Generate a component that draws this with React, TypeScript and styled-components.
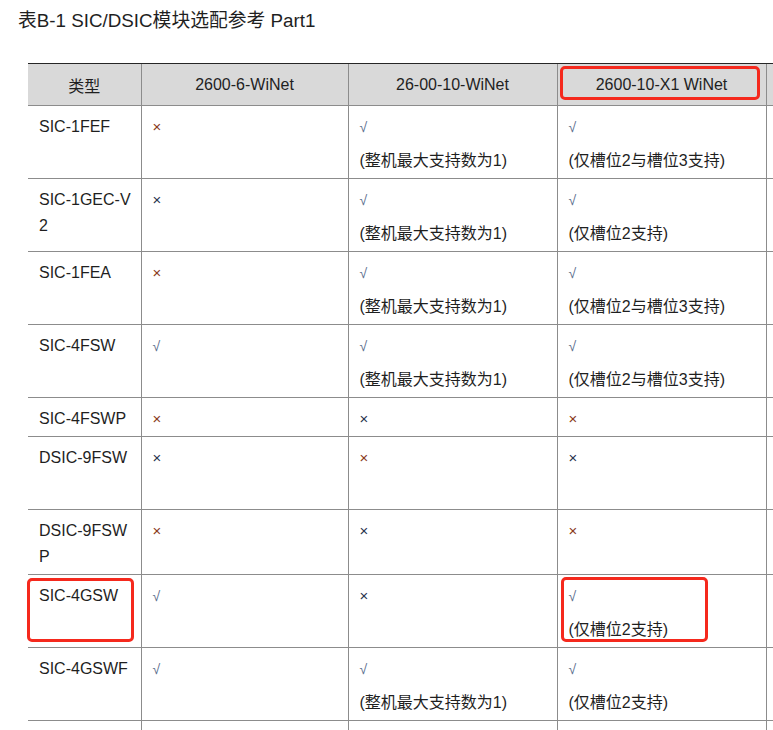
import React from 'react';
import styled, { createGlobalStyle } from 'styled-components';

type Mark = 'yes' | 'no' | 'noRed' | 'none';

type Cell = {
  mark: Mark;
  note?: string;
  spacer?: boolean;
  boxed?: boolean;
};

type Row = {
  name: string;
  nameBoxed?: boolean;
  cells: [Cell, Cell, Cell];
};

const GlobalStyle = createGlobalStyle`
  html, body {
    margin: 0;
    padding: 0;
    background: #ffffff;
    overflow: hidden;
  }
  body {
    font-family: 'Liberation Sans', Arial, 'Noto Sans CJK SC', sans-serif;
    color: #1f1f1f;
  }
`;

const Page = styled.div`
  width: 773px;
  height: 730px;
  overflow: hidden;
  padding: 8px 0 0 18px;
  box-sizing: border-box;
`;

const Title = styled.h1`
  margin: 0;
  font-size: 18.8px;
  font-weight: normal;
  line-height: 26px;
  color: #1f1f1f;
`;

const TableWrap = styled.div`
  margin: 29px 0 0 10px;
`;

const Table = styled.table`
  border-collapse: collapse;
  table-layout: fixed;
  width: 940px;
  font-size: 16px;
`;

const HeadCell = styled.th`
  position: relative;
  height: 41px;
  padding: 0 10px;
  background: #d9d9d9;
  border-top: 1px solid #262626;
  border-left: 1px solid #8c8c8c;
  font-weight: normal;
  text-align: center;
  vertical-align: middle;
  color: #1f1f1f;

  &:first-child {
    border-left: none;
  }
`;

const BodyCell = styled.td`
  position: relative;
  padding: 8px 6px 4px 11px;
  border-top: 1px solid #8c8c8c;
  border-left: 1px solid #8c8c8c;
  vertical-align: top;
  color: #1f1f1f;

  &:first-child {
    border-left: none;
  }
`;

const Para = styled.p`
  margin: 0;
  line-height: 26px;
  min-height: 26px;

  & + & {
    margin-top: 8px;
  }
`;

const NameText = styled.p`
  margin: 0;
  line-height: 26px;
  min-height: 26px;
  word-break: break-all;
`;

const Check = styled.span`
  color: #5a6b8c;
  font-size: 14px;
`;

const Cross = styled.span<{ $red?: boolean }>`
  color: ${(p) => (p.$red ? '#8a3a1c' : '#2a3550')};
  font-size: 15px;
`;

const Highlight = styled.span<{ $top: number; $left: number; $right: number; $bottom: number }>`
  position: absolute;
  top: ${(p) => p.$top}px;
  left: ${(p) => p.$left}px;
  right: ${(p) => p.$right}px;
  bottom: ${(p) => p.$bottom}px;
  border: 3px solid #f5291d;
  border-radius: 5px;
  pointer-events: none;
`;

const maxOne = '(整机最大支持数为1)';
const slot23 = '(仅槽位2与槽位3支持)';
const slot2 = '(仅槽位2支持)';

// non-breaking hyphens keep "SIC-1GEC-V" together like the source wrap
const nb = (s: string) => s.replace(/-/g, '\u2011');

const rows: Row[] = [
  {
    name: 'SIC-1FEF',
    cells: [{ mark: 'noRed' }, { mark: 'yes', note: maxOne }, { mark: 'yes', note: slot23 }],
  },
  {
    name: 'SIC-1GEC-V2',
    cells: [{ mark: 'no' }, { mark: 'yes', note: maxOne }, { mark: 'yes', note: slot2 }],
  },
  {
    name: 'SIC-1FEA',
    cells: [{ mark: 'noRed' }, { mark: 'yes', note: maxOne }, { mark: 'yes', note: slot23 }],
  },
  {
    name: 'SIC-4FSW',
    cells: [{ mark: 'yes' }, { mark: 'yes', note: maxOne }, { mark: 'yes', note: slot23 }],
  },
  {
    name: 'SIC-4FSWP',
    cells: [{ mark: 'noRed' }, { mark: 'no' }, { mark: 'noRed' }],
  },
  {
    name: 'DSIC-9FSW',
    cells: [{ mark: 'no', spacer: true }, { mark: 'noRed' }, { mark: 'no' }],
  },
  {
    name: 'DSIC-9FSWP',
    cells: [{ mark: 'noRed' }, { mark: 'no' }, { mark: 'noRed' }],
  },
  {
    name: 'SIC-4GSW',
    nameBoxed: true,
    cells: [{ mark: 'yes' }, { mark: 'no' }, { mark: 'yes', note: slot2, boxed: true }],
  },
  {
    name: 'SIC-4GSWF',
    cells: [{ mark: 'yes' }, { mark: 'yes', note: maxOne }, { mark: 'yes', note: slot2 }],
  },
  {
    name: '',
    cells: [{ mark: 'none' }, { mark: 'none' }, { mark: 'none' }],
  },
];

const MarkGlyph: React.FC<{ mark: Mark }> = ({ mark }) => {
  if (mark === 'none') return null;
  return mark === 'yes' ? <Check>√</Check> : <Cross $red={mark === 'noRed'}>×</Cross>;
};

export default function App() {
  return (
    <Page>
      <GlobalStyle />
      <Title>表B-1 SIC/DSIC模块选配参考 Part1</Title>
      <TableWrap>
        <Table>
          <colgroup>
            <col style={{ width: 113 }} />
            <col style={{ width: 207 }} />
            <col style={{ width: 209 }} />
            <col style={{ width: 209 }} />
            <col style={{ width: 202 }} />
          </colgroup>
          <thead>
            <tr>
              <HeadCell>类型</HeadCell>
              <HeadCell>2600-6-WiNet</HeadCell>
              <HeadCell>26-00-10-WiNet</HeadCell>
              <HeadCell>
                2600-10-X1 WiNet
                <Highlight $top={2} $left={2} $right={6} $bottom={5} />
              </HeadCell>
              <HeadCell />
            </tr>
          </thead>
          <tbody>
            {rows.map((row, i) => (
              <tr key={i}>
                <BodyCell>
                  <NameText>{nb(row.name)}</NameText>
                  {row.nameBoxed && <Highlight $top={3} $left={-1} $right={7} $bottom={5} />}
                </BodyCell>
                {row.cells.map((cell, j) => (
                  <BodyCell key={j}>
                    <Para>
                      <MarkGlyph mark={cell.mark} />
                    </Para>
                    {cell.note && <Para>{cell.note}</Para>}
                    {cell.spacer && <Para />}
                    {cell.boxed && <Highlight $top={2} $left={3} $right={58} $bottom={5} />}
                  </BodyCell>
                ))}
                <BodyCell />
              </tr>
            ))}
          </tbody>
        </Table>
      </TableWrap>
    </Page>
  );
}
